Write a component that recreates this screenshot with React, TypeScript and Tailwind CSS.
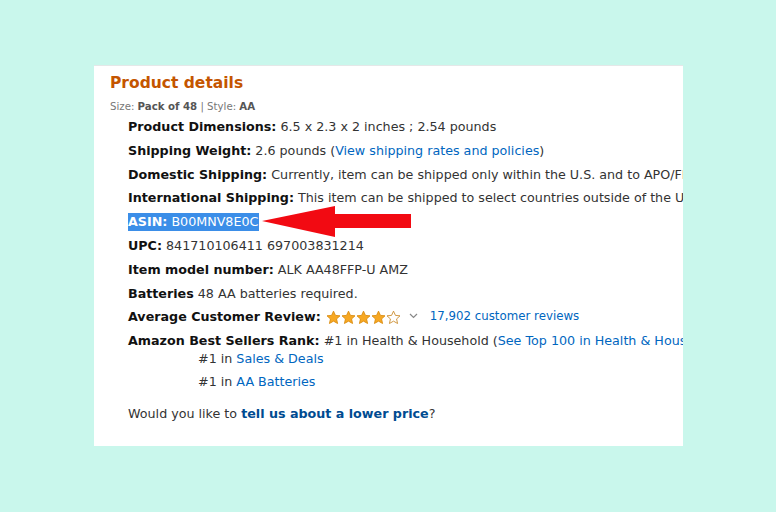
import React from "react";

const Star = ({ filled }: { filled: boolean }) => (
  <svg width="15" height="15" viewBox="0 0 24 24" className="inline-block">
    <polygon
      points="12,1.8 15.1,8.6 22.4,9.3 16.9,14.3 18.5,21.6 12,17.8 5.5,21.6 7.1,14.3 1.6,9.3 8.9,8.6"
      fill={filled ? "#f7a823" : "#ffffff"}
      stroke={filled ? "#d98b0f" : "#c98a2b"}
      strokeWidth="1.4"
      strokeLinejoin="round"
    />
  </svg>
);

export default function App() {
  const font = { fontFamily: '"DejaVu Sans", Verdana, sans-serif' };
  return (
    <div className="w-[776px] h-[512px] bg-[#c9f7ec] overflow-hidden pt-[65px] pl-[94px]" style={font}>
      <div className="w-[589px] h-[381px] bg-white overflow-hidden border-t border-[#e4e8e8] pt-[5px] pl-[16px] whitespace-nowrap text-[#111] text-[12.7px]">
        <div className="text-[#c45500] font-bold text-[15.5px] leading-[24px]">Product details</div>
        <div className="mt-[5px] text-[10.2px] leading-[14px] text-[#777]">
          Size: <span className="font-bold text-[#555]">Pack of 48</span> | Style: <span className="font-bold text-[#555]">AA</span>
        </div>
        <div className="mt-[1px] pl-[18px] leading-[23.8px]">
          <div>
            <b>Product Dimensions:</b> <span className="text-[#333]">6.5 x 2.3 x 2 inches ; 2.54 pounds</span>
          </div>
          <div>
            <b>Shipping Weight:</b> <span className="text-[#333]">2.6 pounds (</span>
            <span className="text-[#0066c0]">View shipping rates and policies</span>
            <span className="text-[#333]">)</span>
          </div>
          <div>
            <b>Domestic Shipping:</b>{" "}
            <span className="text-[#333]">Currently, item can be shipped only within the U.S. and to APO/FPO addresses.</span>
          </div>
          <div>
            <b>International Shipping:</b>{" "}
            <span className="text-[#333]">This item can be shipped to select countries outside of the U.S.</span>
          </div>
          <div className="flex items-center h-[23.8px]">
            <span className="bg-[#3b8ee8] text-white leading-[18px] pr-[1px]">
              <b>ASIN:</b> B00MNV8E0C
            </span>
            <svg width="152" height="32" viewBox="0 0 152 32" className="ml-[2px]">
              <polygon points="1,15 74,0 74,8 150,8 150,22 74,22 74,31" fill="#f20a12" />
            </svg>
          </div>
          <div>
            <b>UPC:</b> <span className="text-[#333]">841710106411 697003831214</span>
          </div>
          <div>
            <b>Item model number:</b> <span className="text-[#333]">ALK AA48FFP-U AMZ</span>
          </div>
          <div>
            <b>Batteries</b> <span className="text-[#333]">48 AA batteries required.</span>
          </div>
          <div className="flex items-center h-[23.8px]">
            <b>Average Customer Review:</b>
            <span className="ml-[5px] flex items-center gap-[0px]">
              <Star filled />
              <Star filled />
              <Star filled />
              <Star filled />
              <Star filled={false} />
            </span>
            <svg width="9" height="6" viewBox="0 0 9 6" className="ml-[8px] mb-[2px]">
              <polyline points="1,1 4.5,4.5 8,1" fill="none" stroke="#888" strokeWidth="1.2" />
            </svg>
            <span className="ml-[12px] text-[#0066c0] text-[11.8px]">17,902 customer reviews</span>
          </div>
          <div>
            <b>Amazon Best Sellers Rank:</b> <span className="text-[#333]">#1 in Health &amp; Household (</span>
            <span className="text-[#0066c0]">See Top 100 in Health &amp; Household</span>
            <span className="text-[#333]">)</span>
          </div>
          <div className="pl-[70px] leading-[18px] mt-[-3px] text-[#333]">
            #1 in <span className="text-[#0066c0]">Sales &amp; Deals</span>
          </div>
          <div className="pl-[70px] leading-[18px] mt-[5px] text-[#333]">
            #1 in <span className="text-[#0066c0]">AA Batteries</span>
          </div>
          <div className="mt-[11px] text-[#333]">
            Would you like to <b className="text-[#004b91]">tell us about a lower price</b>?
          </div>
        </div>
      </div>
    </div>
  );
}
